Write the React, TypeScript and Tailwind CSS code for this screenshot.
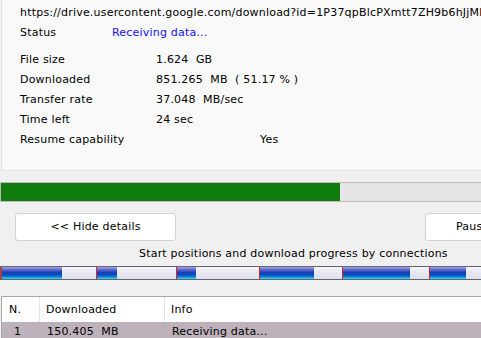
import React from 'react'

const details = [
  { label: 'File size', value: '1.624  GB' },
  { label: 'Downloaded', value: '851.265  MB  ( 51.17 % )' },
  { label: 'Transfer rate', value: '37.048  MB/sec' },
  { label: 'Time left', value: '24 sec' },
]

// [start, filledEnd, segmentEnd] in px along the connections bar
const segments = [
  [1, 62, 96],
  [96, 117, 176],
  [176, 196, 259],
  [259, 314, 342],
  [342, 410, 429],
  [429, 466, 490],
]

const Segment = ({ seg }: { seg: number[] }) => {
  const [start, filled, end] = seg
  return (
    <div className="flex h-full shrink-0" style={{ width: end - start }}>
      <div
        className="h-full border-l border-[#e02020] bg-[linear-gradient(to_bottom,#a4a4e4_0%,#5a62c8_25%,#0b3cb2_50%,#0b62cc_75%,#2ee0ee_100%)]"
        style={{ width: filled - start }}
      />
      <div className="h-full flex-1 bg-[linear-gradient(to_bottom,#f4f4fa_0%,#e6e8f1_50%,#dcdfeb_100%)]" />
    </div>
  )
}

export default function App() {
  return (
    <div className="h-[338px] w-[481px] overflow-hidden bg-[#f0f0f0] font-['DejaVu_Sans',sans-serif] text-[11px] tracking-[0.2px] text-black">
      <div className="ml-[1px] h-[171px] w-[520px] border-b border-l border-[#e2e2e2] bg-[#f9f9f9] pl-[18px] pt-[3px]">
        <div className="h-5 whitespace-nowrap leading-5">
          https://drive.usercontent.google.com/download?id=1P37qpBlcPXmtt7ZH9b6hJjMk
        </div>
        <div className="flex h-5 leading-5">
          <span className="w-[92px]">Status</span>
          <span className="text-[#1010ff]">Receiving data...</span>
        </div>
        <div className="mt-[7px]">
          {details.map((d) => (
            <div key={d.label} className="flex h-5 leading-5">
              <span className="w-[136px] shrink-0">{d.label}</span>
              <span className="whitespace-pre">{d.value}</span>
            </div>
          ))}
          <div className="flex h-5 leading-5">
            <span className="w-[240px] shrink-0">Resume capability</span>
            <span>Yes</span>
          </div>
        </div>
      </div>

      <div className="mt-[11px] flex h-[20px] w-[500px] border border-[#bcbcbc] bg-[#e6e6e6]">
        <div className="h-full w-[339px] bg-[#107c10]" />
      </div>

      <div className="mt-[11px] flex h-[28px] w-[540px] items-stretch">
        <button className="ml-[15px] w-[161px] shrink-0 rounded-[3px] border border-[#d2d2d2] bg-white text-[11px]">
          {'<< Hide details'}
        </button>
        <button className="ml-[249px] w-[100px] shrink-0 rounded-[3px] border border-[#d2d2d2] bg-white pl-[30px] text-left text-[11px]">
          Pause
        </button>
      </div>

      <div className="mt-[5px] h-4 pl-[139px] leading-4 whitespace-nowrap">
        Start positions and download progress by connections
      </div>

      <div className="mt-[4px] flex h-[14px] w-[500px] overflow-hidden border border-[#64646e]">
        {segments.map((s) => (
          <Segment key={s[0]} seg={s} />
        ))}
      </div>

      <div className="h-4" />
      <div className="ml-[1px] w-[500px] border-l border-t border-[#a8a8a8] bg-white">
        <div className="flex h-[25px] items-center leading-[25px]">
          <span className="w-[38px] border-r border-[#e4e4e4] pl-[7px]">N.</span>
          <span className="w-[125px] border-r border-[#e4e4e4] pl-[6px]">Downloaded</span>
          <span className="pl-[6px]">Info</span>
        </div>
        <div className="flex h-[20px] items-center bg-[#bdb2bb] leading-[20px]">
          <span className="w-[38px] pl-[12px]">1</span>
          <span className="w-[125px] whitespace-pre pl-[7px]">150.405  MB</span>
          <span className="pl-[7px]">Receiving data...</span>
        </div>
      </div>
    </div>
  )
}
